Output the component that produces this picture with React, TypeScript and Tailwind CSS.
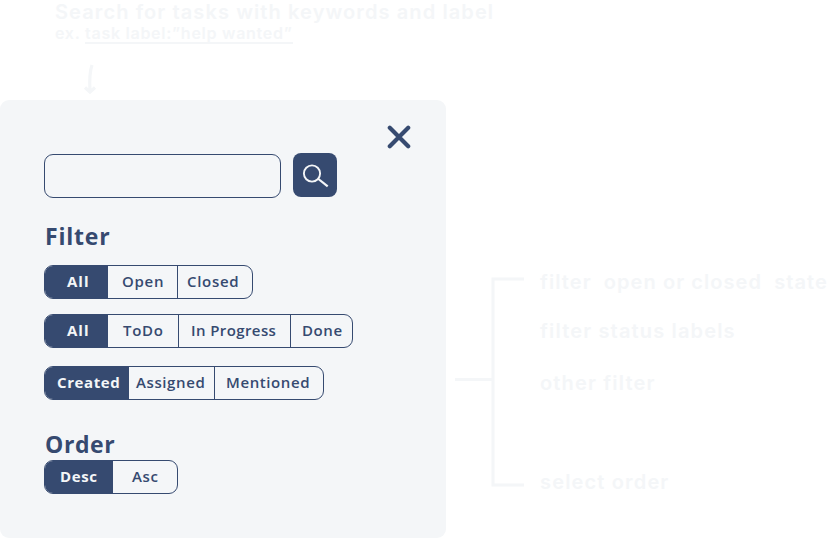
import React from "react";

type Segment = { label: string; box: string; text: string };

const filterState: Segment[] = [
  { label: "All", box: "w-[63px] pl-[22px]", text: "tracking-[1px]" },
  { label: "Open", box: "w-[69px] pl-[14px]", text: "tracking-[0.7px]" },
  { label: "Closed", box: "w-[75px] pl-[9px]", text: "tracking-[0.7px]" },
];

const filterStatus: Segment[] = [
  { label: "All", box: "w-[63px] pl-[22px]", text: "tracking-[1px]" },
  { label: "ToDo", box: "w-[70px] pl-[15px]", text: "tracking-[0.7px]" },
  { label: "In Progress", box: "w-[112px] pl-[12px]", text: "tracking-[0.4px]" },
  { label: "Done", box: "w-[62px] pl-[11px]", text: "tracking-[0.6px]" },
];

const filterOther: Segment[] = [
  { label: "Created", box: "w-[84px] pl-[12px]", text: "tracking-[0.6px]" },
  { label: "Assigned", box: "w-[85px] pl-[7px]", text: "tracking-[0.6px]" },
  { label: "Mentioned", box: "w-[109px] pl-[11px]", text: "tracking-[0.6px]" },
];

const orders: Segment[] = [
  { label: "Desc", box: "w-[68px] pl-[15px]", text: "tracking-[0.6px]" },
  { label: "Asc", box: "w-[64px] pl-[19px]", text: "tracking-[0.6px]" },
];

function Segmented({ items, className }: { items: Segment[]; className: string }) {
  return (
    <div
      className={`flex h-[34px] w-fit overflow-hidden rounded-[9px] border border-[#364a70] ${className}`}
    >
      {items.map((s, i) => (
        <button
          key={s.label}
          className={`flex shrink-0 items-center whitespace-nowrap pb-px text-[15px] leading-none ${s.box} ${s.text} ${
            i === 0 ? "bg-[#364a70] font-bold text-[#f4f6f8]" : "font-semibold text-[#364a70]"
          } ${i > 1 ? "border-l border-[#364a70]" : ""}`}
        >
          {s.label}
        </button>
      ))}
    </div>
  );
}

export default function App() {
  return (
    <div className="flex h-[538px] w-[828px] flex-col overflow-hidden bg-white font-['Inter',sans-serif] font-semibold text-[#f4f6f8]">
      <header className="h-[100px] shrink-0 pl-[55px]">
        <p className="h-[23px] whitespace-nowrap text-[20px] leading-6 tracking-[1.1px]">
          Search for tasks with keywords and label
        </p>
        <p className="h-[21px] whitespace-nowrap text-[16px] leading-[20px] tracking-[0.74px]">
          ex. <span className="inline-block h-[21px] border-b-2 border-[#f4f6f8]">task label:”help wanted”</span>
        </p>
        <svg className="ml-[28px] mt-[20px]" width="16" height="32" viewBox="0 0 16 32" fill="none" stroke="#f4f6f8" strokeWidth="3.200">
          <path d="M9 1C6.300 9 6.300 16 7 27M2 23.500l5 4.500 5-4.500" />
        </svg>
      </header>
      <div className="flex h-[438px]">
        <main className="h-[438px] w-[446px] shrink-0 rounded-[9px] bg-[#f4f6f8] pl-[44px] font-['Open_Sans',sans-serif] text-[#364a70]">
          <div className="flex h-[98px] items-end">
            <input className="h-[44px] w-[237px] rounded-[9px] border border-[#364a70] bg-transparent px-3 outline-none" />
            <button className="mb-px ml-3 h-[44px] w-[44px] rounded-[8px] bg-[#364a70]">
              <svg width="44" height="44" viewBox="0 0 44 44" fill="none" stroke="#f4f6f8">
                <circle cx="19" cy="20.500" r="8.100" strokeWidth="1.900" />
                <path d="M24.800 25.500l9.900 7.900" strokeWidth="2.200" />
              </svg>
            </button>
            <button className="mb-[49px] ml-[50px] h-[24px] w-[24px]">
              <svg width="24" height="24" viewBox="0 0 24 24" stroke="#364a70" strokeWidth="4.200" strokeLinecap="round">
                <path d="M2.800 2.800l18.400 18.400M21.200 2.800L2.800 21.200" />
              </svg>
            </button>
          </div>
          <h2 className="mt-[22px] h-[33px] pl-px text-[23px] font-bold leading-[32px] tracking-[0.8px]">Filter</h2>
          <Segmented items={filterState} className="mt-[12px]" />
          <Segmented items={filterStatus} className="mt-[15px]" />
          <Segmented items={filterOther} className="mt-[18px]" />
          <h2 className="mt-[28px] h-[32px] pl-px text-[23px] font-bold leading-[32px] tracking-[0.6px]">Order</h2>
          <Segmented items={orders} className="" />
        </main>
        <svg className="ml-[9px] mt-[177px] shrink-0" width="69" height="210" viewBox="0 0 69 210" fill="none" stroke="#f4f6f8" strokeWidth="3">
          <path d="M69 2H38V208H69M0 102.500H38" />
        </svg>
        <div className="ml-[16px] flex shrink-0 flex-col whitespace-pre pt-[170px] text-[20px] leading-6 tracking-[1.16px]">
          <p className="w-[288px] tracking-[1.06px]">{"filter  open or closed  state"}</p>
          <p className="mt-[25px]">filter status labels</p>
          <p className="mt-[28px]">other filter</p>
          <p className="mt-[75px]">select order</p>
        </div>
      </div>
    </div>
  );
}
